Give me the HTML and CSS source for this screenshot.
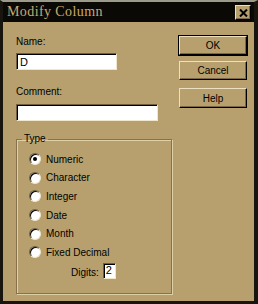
FILE: index.html
```html
<!DOCTYPE html>
<html lang="en">
<head>
  <meta charset="UTF-8" />
  <title>Modify Column</title>
  <link rel="stylesheet" href="styles.css">
</head>
<body>
  <div class="window">
    <div class="titlebar">
      <span class="title">Modify Column</span>
      <button class="close" title="Close">
        <svg width="9" height="8" viewBox="0 0 9 8"><path d="M1 0.5 L8 7.5 M8 0.5 L1 7.5" stroke="#000" stroke-width="2"/></svg>
      </button>
    </div>
    <div class="dialog">
      <div class="left">
        <label class="lbl" for="colName">Name:</label>
        <input class="field name-field" id="colName" type="text" value="D">
        <label class="lbl comment-lbl" for="colComment">Comment:</label>
        <input class="field comment-field" id="colComment" type="text" value="">
        <fieldset class="group">
          <legend>Type</legend>
          <label class="opt"><input type="radio" name="type" checked>Numeric</label>
          <label class="opt"><input type="radio" name="type">Character</label>
          <label class="opt"><input type="radio" name="type">Integer</label>
          <label class="opt"><input type="radio" name="type">Date</label>
          <label class="opt"><input type="radio" name="type">Month</label>
          <label class="opt"><input type="radio" name="type">Fixed Decimal</label>
          <div class="digits">
            <label for="digits">Digits:</label>
            <input class="field digits-field" id="digits" type="text" value="2">
          </div>
        </fieldset>
      </div>
      <div class="right">
        <button class="btn default">OK</button>
        <button class="btn cancel">Cancel</button>
        <button class="btn help">Help</button>
      </div>
    </div>
  </div>
</body>
</html>
```

FILE: styles.css
```css
body { margin: 0; background: #14110b; font-family: 'Liberation Sans', Arial, sans-serif; font-size: 10px; color: #000; }
.window { width: 258px; height: 304px; box-sizing: border-box; background: #b7a06e;
          border-top: 2px solid #9c9a88; border-left: 3px solid #18150e; border-right: 4px solid #18150e; border-bottom: 3px solid #18150e; }
.titlebar { height: 20px; background: #0b0905; display: flex; align-items: center; justify-content: space-between; padding: 0 3px 0 4px; }
.title { font-family: 'Liberation Serif', 'Times New Roman', serif; font-size: 14px; letter-spacing: 0.4px; color: #c9a96e; }
.close { width: 16px; height: 15px; padding: 0; margin-top: 1px; background: #b7a06e; display: flex; align-items: center; justify-content: center;
         border: 1px solid; border-color: #ece0c0 #000 #000 #ece0c0; box-shadow: inset -1px -1px 0 #7a6848; }

.dialog { display: flex; padding: 14px 0 0 13px; }
.left { width: 156px; display: flex; flex-direction: column; align-items: flex-start; }
.right { margin-left: 7px; display: flex; flex-direction: column; }

.lbl { line-height: 12px; height: 12px; }
.field { box-sizing: border-box; background: #fff; font-family: 'Liberation Sans', Arial, sans-serif; font-size: 11px; color: #000;
         border: 1px solid; border-color: #6e5e3e #efe6cc #efe6cc #6e5e3e; box-shadow: inset 1px 1px 0 #000; outline: none; }
.name-field { width: 101px; height: 17px; margin-top: 5px; padding: 1px 2px 0 3px; }
.comment-lbl { margin-top: 16px; }
.comment-field { width: 142px; height: 17px; margin-top: 6px; }

.group { box-sizing: border-box; width: 156px; height: 161px; margin: 12px 0 0 0; padding: 5px 0 0 12px;
         border: 1px solid #86724c; box-shadow: 1px 1px 0 #ddcfa6, inset 1px 1px 0 #ddcfa6; }
.group legend { padding: 0 2px; margin-left: -7px; line-height: 12px; }
.opt { display: flex; align-items: center; height: 18.6px; }
.opt input { appearance: none; margin: 0 5px 0 0; width: 12px; height: 12px; border-radius: 50%; background: #fff; box-sizing: border-box;
             border: 1px solid; border-color: #6e5e3e #efe6cc #efe6cc #6e5e3e; box-shadow: inset 1px 1px 0 #000; position: relative; }
.opt input:checked::after { content: ""; position: absolute; left: 3px; top: 3px; width: 4px; height: 4px; border-radius: 50%; background: #000; }
.digits { display: flex; align-items: flex-end; margin: 1px 0 0 42px; }
.digits label { line-height: 12px; }
.digits-field { width: 13px; height: 16px; margin-left: 4px; padding: 0 0 2px 2px; font-size: 11px; line-height: 12px; }

.btn { box-sizing: border-box; width: 68px; height: 19px; padding: 0; background: #b7a06e; font-family: 'Liberation Sans', Arial, sans-serif; font-size: 10px; color: #000;
       border: 1px solid; border-color: #ece0c0 #000 #000 #ece0c0; box-shadow: inset -1px -1px 0 #7a6848; }
.btn.default { outline: 1px solid #000; outline-offset: 0; box-shadow: inset -1px -1px 0 #7a6848, 1px 1px 0 #000; }
.btn.cancel { margin-top: 6px; }
.btn.help { margin-top: 8px; height: 20px; }
```
